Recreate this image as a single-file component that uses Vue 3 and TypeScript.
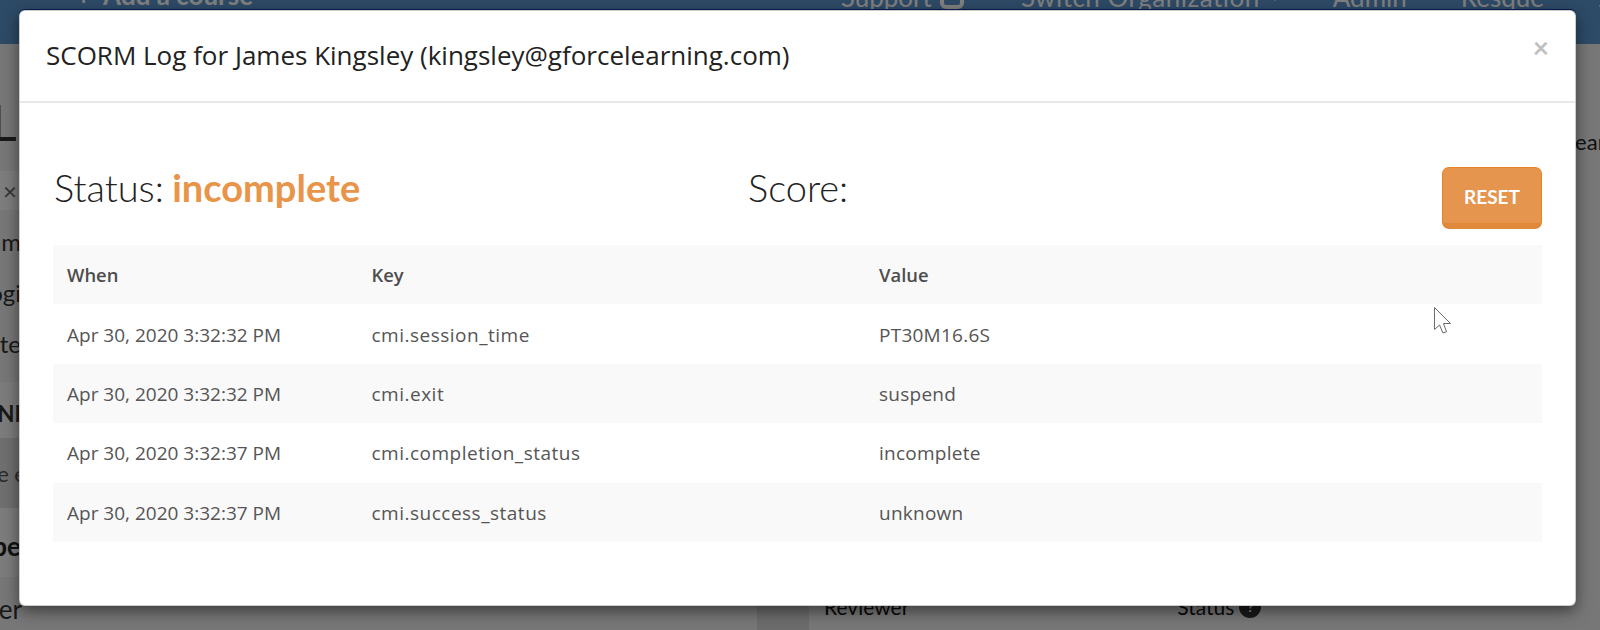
<script setup lang="ts">
interface LogRow {
  when: string;
  key: string;
  value: string;
}

const rows: LogRow[] = [
  { when: "Apr 30, 2020 3:32:32 PM", key: "cmi.session_time", value: "PT30M16.6S" },
  { when: "Apr 30, 2020 3:32:32 PM", key: "cmi.exit", value: "suspend" },
  { when: "Apr 30, 2020 3:32:37 PM", key: "cmi.completion_status", value: "incomplete" },
  { when: "Apr 30, 2020 3:32:37 PM", key: "cmi.success_status", value: "unknown" },
];
</script>

<template>
  <div class="page">
    <header class="topbar">
      <div class="brand">
        <span class="plus">+</span>
        <span>Add a course</span>
      </div>
      <nav class="nav">
        <span class="support">Support <i class="support-icon"></i></span>
        <span class="switch">Switch Organization <i class="caret"></i></span>
        <span>Admin</span>
        <span>Resque</span>
        <span class="count">2</span>
      </nav>
    </header>

    <div class="content">
      <aside class="left">
        <div class="title-row">L</div>
        <div class="tag-row">×</div>
        <div class="list-row">Comm</div>
        <div class="list-row">Logi</div>
        <div class="list-row">Inte</div>
        <div class="band">NI</div>
        <div class="dark-band">e e</div>
        <div class="band-low">pe</div>
        <div class="last">er</div>
      </aside>
      <div class="spacer"></div>
      <div class="gutter"></div>
      <section class="right">
        <div class="search">Search</div>
        <div class="columns">
          <span>Reviewer</span>
          <span class="status-col">Status <i class="help">?</i></span>
        </div>
      </section>
    </div>

    <div class="backdrop"></div>

    <div class="modal">
      <div class="modal-header">
        <h4>SCORM Log for James Kingsley (kingsley@gforcelearning.com)</h4>
        <span class="close">×</span>
      </div>
      <div class="modal-body">
        <div class="summary">
          <div class="status">Status: <strong>incomplete</strong></div>
          <div class="score">Score:</div>
          <button class="reset">RESET</button>
        </div>
        <table>
          <colgroup>
            <col class="col-when" />
            <col class="col-key" />
            <col />
          </colgroup>
          <thead>
            <tr>
              <th>When</th>
              <th>Key</th>
              <th>Value</th>
            </tr>
          </thead>
          <tbody>
            <tr v-for="(row, i) in rows" :key="i">
              <td>{{ row.when }}</td>
              <td class="key-cell">{{ row.key }}</td>
              <td class="value-cell">{{ row.value }}</td>
            </tr>
          </tbody>
        </table>
      </div>
    </div>

    <svg class="cursor" width="19" height="28" viewBox="0 0 19 28">
      <path d="M0.5 0.5V22.5L5.5 18L9 26L12.5 24.8L9.5 16.5H16.5Z" fill="#fff" stroke="#6b6b6b" stroke-width="1" />
    </svg>
  </div>
</template>

<style scoped>
.page {
  position: relative;
  width: 1600px;
  height: 630px;
  overflow: hidden;
  background: #efefef;
  font-family: Lato, "Open Sans", sans-serif;
  color: #333;
}

.topbar {
  height: 44px;
  background: #5a94cc;
  display: flex;
  justify-content: space-between;
  color: #fff;
  font-size: 26px;
  line-height: 30px;
  overflow: hidden;
}

.brand {
  display: flex;
  gap: 12px;
  margin: -20px 0 0 76px;
  font-weight: 700;
}

.nav {
  display: flex;
  align-items: flex-start;
  gap: 54px;
  margin: -18px -8px 0 0;
}

.support {
  display: flex;
  gap: 8px;
  align-items: center;
  margin-right: 3px;
}

.support-icon {
  width: 24px;
  height: 20px;
  margin-top: 4px;
  border: 4px solid #fff;
  border-radius: 6px;
  box-sizing: border-box;
}

.switch {
  display: flex;
  align-items: center;
  gap: 11px;
  letter-spacing: 0.5px;
}

.caret {
  width: 0;
  height: 0;
  margin-top: 2px;
  border-left: 4px solid transparent;
  border-right: 4px solid transparent;
  border-top: 5px solid #fff;
}

.count {
  color: #e8e8e8;
  width: 10px;
  overflow: hidden;
}

.content {
  display: flex;
  height: 586px;
}

.left {
  width: 30px;
  flex-shrink: 0;
  white-space: nowrap;
  font-size: 24px;
  display: flex;
  flex-direction: column;
}

.left > div {
  display: flex;
  justify-content: flex-end;
  align-items: center;
  padding-right: 9px;
  overflow: hidden;
  color: #333;
}

.left > .title-row {
  height: 127px;
  box-sizing: border-box;
  padding: 28px 0 0;
  font-size: 50px;
  font-weight: 400;
  justify-content: flex-start;
  text-indent: -9px;
}

.left > .tag-row {
  height: 39px;
  background: #fbfbfb;
  justify-content: flex-start;
  padding-left: 3px;
  color: #666;
}

.left > .list-row {
  height: 51px;
}

.tag-row + .list-row {
  margin-top: 6px;
}

.left > .band {
  height: 56px;
  box-sizing: border-box;
  padding-top: 6px;
  margin-top: 13px;
  background: #f8f8f8;
  font-size: 22px;
  font-weight: 700;
}

.left > .dark-band {
  height: 70px;
  background: #dedede;
  color: #555;
  font-size: 22px;
  padding-right: 4px;
}

.left > .band-low {
  height: 69px;
  padding-top: 6px;
  box-sizing: border-box;
  background: #f8f8f8;
  color: #222;
  font-size: 26px;
  font-weight: 700;
}

.left > .last {
  height: 53px;
  padding-top: 10px;
  box-sizing: border-box;
  font-size: 26px;
  padding-right: 8px;
}

.spacer {
  width: 727px;
}

.gutter {
  width: 52px;
  background: #d9d9d9;
  margin-top: 500px;
}

.right {
  flex: 1;
  display: flex;
  flex-direction: column;
  font-size: 21px;
}

.search {
  margin: 86px -28px 0 0;
  text-align: right;
  font-size: 22px;
  color: #222;
  line-height: 24px;
}

.columns {
  display: flex;
  margin-top: 441px;
  padding-left: 15px;
  color: #111;
  line-height: 24px;
}

.status-col {
  display: flex;
  gap: 5px;
  margin-left: 268px;
  align-items: center;
}

.help {
  width: 22px;
  height: 22px;
  border-radius: 50%;
  background: #333;
  color: #fff;
  font-size: 14px;
  font-style: normal;
  font-weight: 700;
  text-align: center;
  line-height: 22px;
}

.backdrop {
  position: absolute;
  inset: 0;
  background: rgba(0, 0, 0, 0.5);
}

.modal {
  position: absolute;
  left: 19px;
  top: 10px;
  width: 1557px;
  box-sizing: border-box;
  background: #fff;
  border: 1px solid rgba(0, 0, 0, 0.2);
  border-radius: 6px;
  box-shadow: 0 5px 15px rgba(0, 0, 0, 0.5), 0 -1px 0 #0e1d55;
}

.modal-header {
  height: 92px;
  box-sizing: border-box;
  border-bottom: 2px solid #e8e8e8;
  padding: 0 26px;
  display: flex;
  justify-content: space-between;
  align-items: center;
}

h4 {
  margin: -2px 0 0;
  font-family: "Open Sans", sans-serif;
  font-size: 26px;
  font-weight: 400;
  color: #222;
}

.close {
  font-size: 28px;
  font-weight: 700;
  color: #c0c0c0;
  margin-top: -18px;
}

.modal-body {
  padding: 64px 33px 63px;
}

.summary {
  display: flex;
  align-items: center;
  height: 62px;
  margin-bottom: 16px;
  font-size: 38px;
  font-weight: 300;
  color: #222;
}

.status {
  width: 695px;
  box-sizing: border-box;
  padding-left: 1px;
  margin-top: -22px;
}

.status strong {
  margin-left: -2px;
  color: #e8954a;
  font-weight: 700;
}

.score {
  flex: 1;
  margin-top: -22px;
}

.reset {
  width: 100px;
  height: 62px;
  border: 1px solid #e8841f;
  border-bottom: 6px solid #e0893a;
  border-radius: 7px;
  background: #e5954e;
  color: #fff;
  font-family: inherit;
  font-size: 19px;
  font-weight: 700;
  padding: 2px 0 0;
}

table {
  width: 100%;
  border-collapse: collapse;
  table-layout: fixed;
  font-family: "Open Sans", sans-serif;
  font-size: 19px;
  color: #555;
}

.col-when {
  width: 304.5px;
}

.col-key {
  width: 507.5px;
}

th,
td {
  box-sizing: border-box;
  height: 59.4px;
  padding: 0 14px;
  text-align: left;
}

td {
  padding-top: 1px;
}

th {
  font-weight: 600;
  font-size: 18.4px;
  color: #4d4d4d;
}

.key-cell {
  letter-spacing: 0.5px;
}

.value-cell {
  letter-spacing: 0.25px;
}

thead tr,
tbody tr:nth-child(even) {
  background: #f9f9f9;
}

.cursor {
  position: absolute;
  left: 1434px;
  top: 307px;
}
</style>
